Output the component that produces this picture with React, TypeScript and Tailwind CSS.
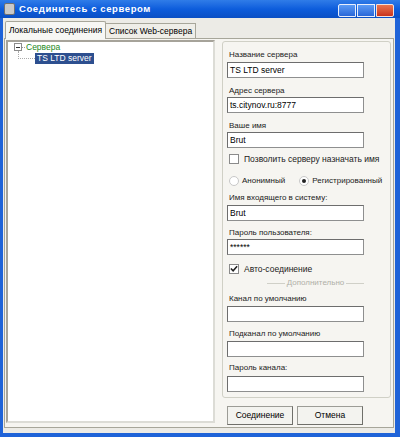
import React from "react";

const font = { fontFamily: '"Liberation Sans", Arial, sans-serif' };

function Field({ label, value, top, gap = 0 }: { label: string; value?: string; top: number; gap?: number }) {
    return (
        <div style={{ marginTop: top }} className="flex flex-col">
            <div className="h-[12px] leading-[12px] text-[8px] text-[#222] pl-[6px]">{label}</div>
            <div style={{ marginTop: gap }} className="ml-[4px] w-[137px] h-[16px] bg-white border border-[#8e8f8f] border-t-[#6d6d6d] border-l-[#6d6d6d] text-[8.5px] leading-[14px] pl-[2px] text-black">
                {value}
            </div>
        </div>
    );
}

function Check({ label, checked, top }: { label: string; checked?: boolean; top: number }) {
    return (
        <div style={{ marginTop: top }} className="flex items-center h-[12px] pl-[6px] gap-[5px] text-[8.5px] text-[#222]">
            <div className="w-[10px] h-[10px] bg-white border border-[#8b8b8b] flex items-center justify-center shrink-0">
                {checked && (
                    <svg width="8" height="8" viewBox="0 0 9 9">
                        <path d="M1 4 L3.5 6.5 L8 1.5" stroke="#222" strokeWidth="1.8" fill="none" />
                    </svg>
                )}
            </div>
            <span className="whitespace-nowrap">{label}</span>
        </div>
    );
}

function Radio({ label, on }: { label: string; on?: boolean }) {
    return (
        <div className="flex items-center gap-[3px] text-[8px] text-[#222]">
            <div className="w-[10px] h-[10px] rounded-full bg-white border border-[#c8c8c8] flex items-center justify-center">
                {on && <div className="w-[4px] h-[4px] rounded-full bg-[#222]" />}
            </div>
            <span className="whitespace-nowrap">{label}</span>
        </div>
    );
}

export default function App() {
    return (
        <div style={font} className="w-[400px] h-[437px] bg-[#1f63d8] flex flex-col overflow-hidden">
            {/* title bar */}
            <div className="h-[20px] flex items-center bg-gradient-to-b from-[#2f7ce8] via-[#0d5ddc] to-[#0a4fc4] pl-[4px] pr-[6px]">
                <div className="w-[11px] h-[12px] rounded-[2px] bg-[#c9c9c9] border border-[#707070] mr-[4px]" />
                <span className="text-white font-bold text-[9.5px] tracking-[0.6px] leading-[14px]">Соединитесь с сервером</span>
                <div className="ml-auto flex gap-[1px] mt-[2px]">
                    <div className="w-[18px] h-[13px] bg-gradient-to-b from-[#5b9bf5] to-[#2a67d8] border border-[#e8eefb] rounded-l-[2px]" />
                    <div className="w-[18px] h-[13px] bg-gradient-to-b from-[#5b9bf5] to-[#2a67d8] border border-[#e8eefb]" />
                    <div className="w-[18px] h-[13px] bg-gradient-to-b from-[#e9744f] to-[#c8321c] border border-[#f3e0da] rounded-r-[2px]" />
                </div>
            </div>
            {/* body */}
            <div className="flex-1 ml-[3px] mr-[5px] mb-[4px] bg-[#ecebe6] flex flex-col">
                {/* tabs */}
                <div className="flex items-end h-[20px] pl-[2px] pt-[2px] text-[8.5px]">
                    <div className="h-[18px] px-[3px] bg-[#f7f7f4] border border-b-0 border-[#a7a69a] rounded-t-[2px] flex items-center relative z-10 -mb-[1px]">
                        Локальные соединения
                    </div>
                    <div className="h-[15px] px-[3px] bg-[#efeee8] border border-b-0 border-l-0 border-[#a7a69a] flex items-center">
                        Список Web-сервера
                    </div>
                </div>
                {/* panel */}
                <div className="flex-1 mx-[1px] mb-[5px] bg-[#f6f5f1] border border-[#a7a69a] flex pl-[1px] pt-[1px] pb-[2px]">
                    {/* tree */}
                    <div className="w-[209px] h-[383px] bg-white border-[2px] border-[#a6a39a] border-r-[#dcdcd6] border-b-[#dcdcd6] relative text-[8.5px]">
                        <div className="absolute left-[6px] top-[0px] h-[10px] flex items-center">
                            <div className="w-[8px] h-[8px] border border-[#8c8c8c] flex items-center justify-center bg-white">
                                <div className="w-[4px] h-[1px] bg-[#333]" />
                            </div>
                            <div className="w-[3px] border-t border-dotted border-[#999]" />
                            <span className="text-[#1a8a1a] ml-[1px] leading-[10px]">Сервера</span>
                        </div>
                        <div className="absolute left-[10px] top-[9px] w-[1px] h-[8px] border-l border-dotted border-[#aaa]" />
                        <div className="absolute left-[10px] top-[16px] w-[17px] h-[1px] border-t border-dotted border-[#aaa]" />
                        <div className="absolute left-[27px] top-[11px] h-[11px] px-[2px] bg-[#2d4f8f] text-white leading-[11px]">TS LTD server</div>
                    </div>
                    {/* right */}
                    <div className="ml-[7px] flex flex-col">
                        <div className="w-[169px] h-[357px] mt-[1px] border border-[#d0d0c6] rounded-[3px] flex flex-col">
                            <Field label="Название сервера" value="TS LTD server" top={7} gap={1} />
                            <Field label="Адрес сервера" value="ts.citynov.ru:8777" top={7} />
                            <Field label="Ваше имя" value="Brut" top={7} />
                            <Check label="Позволить серверу назначать имя" top={5} />
                            <div className="flex items-center h-[12px] pl-[6px] gap-[14px] mt-[10px]">
                                <Radio label="Анонимный" />
                                <Radio label="Регистрированный" on />
                            </div>
                            <Field label="Имя входящего в систему:" value="Brut" top={5} gap={1} />
                            <Field label="Пароль пользователя:" value="******" top={6} />
                            <Check label="Авто-соединение" checked top={8} />
                            <div className="flex items-center h-[12px] mt-[2px] pl-[44px] pr-[26px] text-[8px] text-[#b0b0a8]">
                                <div className="flex-1 h-[1px] bg-[#d0d0c8]" />
                                <span className="px-[2px]">Дополнительно</span>
                                <div className="flex-1 h-[1px] bg-[#d0d0c8]" />
                            </div>
                            <Field label="Канал по умолчанию" top={4} gap={1} />
                            <Field label="Подканал по умолчанию" top={6} gap={1} />
                            <Field label="Пароль канала:" top={5} gap={2} />
                        </div>
                        <div className="flex gap-[4px] ml-[5px] mt-[8px] text-[8.5px]">
                            <div className="w-[66px] h-[19px] bg-[#f3f3ef] border border-[#9c9c96] border-r-[#6f6f6a] border-b-[#6f6f6a] flex items-center justify-center">
                                Соединение
                            </div>
                            <div className="w-[66px] h-[19px] bg-[#f3f3ef] border border-[#9c9c96] border-r-[#6f6f6a] border-b-[#6f6f6a] flex items-center justify-center">
                                Отмена
                            </div>
                        </div>
                    </div>
                </div>
            </div>
        </div>
    );
}
